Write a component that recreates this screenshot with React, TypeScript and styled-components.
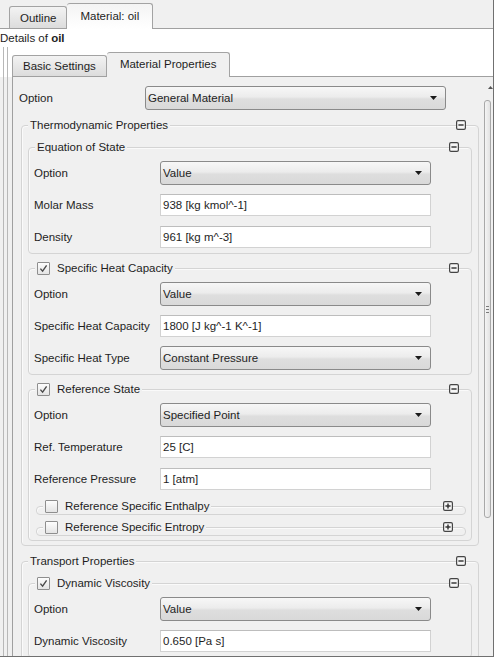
import React from 'react'
import styled, { createGlobalStyle } from 'styled-components'

const GlobalStyle = createGlobalStyle`
  html, body {
    margin: 0;
    padding: 0;
    background: #ffffff;
  }
  body {
    font-family: "Liberation Sans", Arial, sans-serif;
    font-size: 11.5px;
    color: #1e1e1e;
  }
`

const Window = styled.div`
  width: 493px;
  height: 656px;
  border-right: 1px solid #707070;
  border-bottom: 1px solid #707070;
  overflow: hidden;
  display: flex;
  flex-direction: column;
  background: #ffffff;
`

const TabBar = styled.div<{ $height: number; $bg: string }>`
  display: flex;
  align-items: flex-end;
  height: ${p => p.$height}px;
  background: ${p => p.$bg};
  flex-shrink: 0;
`

const TabLine = styled.div<{ $width?: number }>`
  align-self: stretch;
  border-bottom: 1px solid #a0a0a0;
  ${p => (p.$width ? `width: ${p.$width}px;` : 'flex: 1;')}
`

const Tab = styled.div<{ $active?: boolean; $height: number; $pad: number; $activeBg?: string }>`
  box-sizing: border-box;
  height: ${p => p.$height}px;
  padding: 0 ${p => p.$pad}px;
  display: flex;
  align-items: center;
  white-space: nowrap;
  border: 1px solid #a3a3a3;
  border-radius: 3px 3px 0 0;
  ${p =>
    p.$active
      ? `border-bottom: none; background: ${p.$activeBg}; padding-bottom: 2px;`
      : `border-bottom: 1px solid #a0a0a0; background: linear-gradient(#f3f3f3, #dcdcdc);`}
  & + & {
    ${p => (p.$active ? '' : 'border-left: none;')}
  }
`

const DetailsRow = styled.div`
  height: 18px;
  line-height: 18px;
  padding-left: 0;
  background: #ffffff;
  flex-shrink: 0;

  b {
    font-weight: bold;
  }
`

const RailRow = styled.div<{ $bg: string; $grow?: boolean }>`
  display: flex;
  background: ${p => p.$bg};
  ${p => (p.$grow ? 'flex: 1; min-height: 0;' : 'flex-shrink: 0;')}
`

const Rails = styled.div`
  width: 3px;
  margin: 0 4px 0 3px;
  border-left: 1px solid #b8b8b8;
  border-right: 1px solid #b8b8b8;
  flex-shrink: 0;
`

const Panel = styled.div`
  flex: 1;
  display: flex;
  border-left: 1px solid #a0a0a0;
  background: #f0f0f0;
  min-height: 0;
`

const PanelBody = styled.div`
  flex: 1;
  padding-top: 9px;
  overflow: hidden;
`

const Scrollbar = styled.div`
  width: 9px;
  display: flex;
  flex-direction: column;
  flex-shrink: 0;
`

const ScrollArrow = styled.div`
  height: 23px;
  display: flex;
  justify-content: flex-end;
  align-items: center;
  padding-bottom: 2px;
  box-sizing: border-box;
`

const Thumb = styled.div`
  box-sizing: border-box;
  width: 7px;
  height: 418px;
  border: 1px solid #a8a8a8;
  border-radius: 3px;
  background: linear-gradient(to right, #f4f4f4, #e2e2e2);
  display: flex;
  align-items: center;
  justify-content: center;
`

const Grip = styled.div`
  width: 3px;
  height: 7px;
  background: repeating-linear-gradient(#7a7a7a 0 1px, transparent 1px 3px);
`

const Row = styled.div<{ $first?: boolean; $indent: number }>`
  display: flex;
  align-items: center;
  height: 24px;
  margin-top: ${p => (p.$first ? 6 : 8)}px;
  padding-left: ${p => p.$indent}px;
`

const Label = styled.div`
  width: 126px;
  flex-shrink: 0;
  white-space: nowrap;
`

const Select = styled.div<{ $width: number }>`
  box-sizing: border-box;
  width: ${p => p.$width}px;
  height: 24px;
  border: 1px solid #8a8a8a;
  border-radius: 3px;
  background: linear-gradient(#f7f7f7 0%, #ececec 45%, #dedede 55%, #d9d9d9 100%);
  display: flex;
  align-items: center;
  padding: 0 8px 0 2px;
  white-space: nowrap;

  svg {
    margin-left: auto;
  }
`

const Input = styled.div<{ $width: number }>`
  box-sizing: border-box;
  width: ${p => p.$width}px;
  height: 22px;
  border: 1px solid #d2d2d2;
  border-top-color: #bdbdbd;
  background: #ffffff;
  display: flex;
  align-items: center;
  padding-left: 2px;
  white-space: nowrap;
`

const Box = styled.div<{ $top: number; $left: number; $right: number; $bottom: number }>`
  margin: ${p => p.$top}px ${p => p.$right}px 0 ${p => p.$left}px;
  padding-bottom: ${p => p.$bottom}px;
  border: 1px solid #d4d4d4;
  border-radius: 4px;
  box-shadow: inset 1px 1px 0 #fafafa;
`

const Header = styled.div`
  display: flex;
  align-items: center;
  height: 16px;
  margin-top: -9px;
  padding: 0 12px 0 6px;
`

const HeaderLabel = styled.div`
  display: flex;
  align-items: center;
  gap: 7px;
  padding: 0 2px;
  background: #f0f0f0;
  white-space: nowrap;
`

const Check = styled.div`
  box-sizing: border-box;
  width: 13px;
  height: 13px;
  border: 1px solid #8e8e8e;
  border-radius: 1px;
  background: linear-gradient(#fdfdfd, #e4e4e4);
  display: flex;
  align-items: center;
  justify-content: center;
`

const Toggle = styled.svg`
  margin-left: auto;
  flex-shrink: 0;
`

function ArrowDown() {
  return (
    <svg width="7" height="4" viewBox="0 0 7 4">
      <polygon points="0,0 7,0 3.5,4" fill="#1a1a1a" />
    </svg>
  )
}

function ToggleIcon({ open }: { open: boolean }) {
  return (
    <Toggle width="10" height="10" viewBox="0 0 10 10">
      <rect x="0.6" y="0.6" width="8.8" height="8.8" rx="1.4" fill="#f6f6f6" stroke="#454545" strokeWidth="1.2" />
      <line x1="2.4" y1="5" x2="7.6" y2="5" stroke="#2e2e2e" strokeWidth="1.4" />
      {!open && <line x1="5" y1="2.4" x2="5" y2="7.6" stroke="#2e2e2e" strokeWidth="1.4" />}
    </Toggle>
  )
}

function CheckBox({ checked }: { checked: boolean }) {
  return (
    <Check>
      {checked && (
        <svg width="9" height="9" viewBox="0 0 9 9">
          <path d="M1.4 4.6 L3.6 7.2 L7.6 1.4" fill="none" stroke="#4a4a4a" strokeWidth="1.4" />
        </svg>
      )}
    </Check>
  )
}

type Field = { label: string; kind: 'select' | 'input'; value: string }

function Fields({ fields, indent, width }: { fields: Field[]; indent: number; width: number }) {
  return (
    <>
      {fields.map((f, i) => (
        <Row key={f.label} $first={i === 0} $indent={indent}>
          <Label>{f.label}</Label>
          {f.kind === 'select' ? (
            <Select $width={width}>
              {f.value}
              <ArrowDown />
            </Select>
          ) : (
            <Input $width={width}>{f.value}</Input>
          )}
        </Row>
      ))}
    </>
  )
}

type GroupProps = {
  title: string
  check?: boolean
  checked?: boolean
  open?: boolean
  top: number
  left: number
  right: number
  bottom: number
  children?: React.ReactNode
}

function Group({ title, check, checked = false, open = true, top, left, right, bottom, children }: GroupProps) {
  return (
    <Box $top={top} $left={left} $right={right} $bottom={bottom}>
      <Header>
        <HeaderLabel>
          {check && <CheckBox checked={checked} />}
          {title}
        </HeaderLabel>
        <ToggleIcon open={open} />
      </Header>
      {children}
    </Box>
  )
}

const equation: Field[] = [
  { label: 'Option', kind: 'select', value: 'Value' },
  { label: 'Molar Mass', kind: 'input', value: '938 [kg kmol^-1]' },
  { label: 'Density', kind: 'input', value: '961 [kg m^-3]' },
]

const heatCapacity: Field[] = [
  { label: 'Option', kind: 'select', value: 'Value' },
  { label: 'Specific Heat Capacity', kind: 'input', value: '1800 [J kg^-1 K^-1]' },
  { label: 'Specific Heat Type', kind: 'select', value: 'Constant Pressure' },
]

const referenceState: Field[] = [
  { label: 'Option', kind: 'select', value: 'Specified Point' },
  { label: 'Ref. Temperature', kind: 'input', value: '25 [C]' },
  { label: 'Reference Pressure', kind: 'input', value: '1 [atm]' },
]

const viscosity: Field[] = [
  { label: 'Option', kind: 'select', value: 'Value' },
  { label: 'Dynamic Viscosity', kind: 'input', value: '0.650 [Pa s]' },
]

export default function App() {
  return (
    <>
      <GlobalStyle />
      <Window>
        <TabBar $height={29} $bg="#f0f0f0">
          <TabLine $width={9} />
          <Tab $height={23} $pad={10}>Outline</Tab>
          <Tab $active $height={26} $pad={13} $activeBg="linear-gradient(#f4f4f4, #ffffff)">
            Material: oil
          </Tab>
          <TabLine />
        </TabBar>

        <DetailsRow>
          Details of <b>oil</b>
        </DetailsRow>

        <RailRow $bg="#ffffff">
          <Rails />
          <TabBar $height={30} $bg="#ffffff" style={{ flex: 1 }}>
            <Tab $height={22} $pad={10}>Basic Settings</Tab>
            <Tab $active $height={25} $pad={13} $activeBg="#f0f0f0">
              Material Properties
            </Tab>
            <TabLine />
          </TabBar>
        </RailRow>

        <RailRow $bg="#f0f0f0" $grow>
          <Rails />
          <Panel>
            <PanelBody>
              <Row $first $indent={6} style={{ marginTop: 0 }}>
                <Label>Option</Label>
                <Select $width={301}>
                  General Material
                  <ArrowDown />
                </Select>
              </Row>

              <Group title="Thermodynamic Properties" top={15} left={8} right={5} bottom={4}>
                <Group title="Equation of State" top={14} left={6} right={6} bottom={4}>
                  <Fields fields={equation} indent={5} width={271} />
                </Group>
                <Group title="Specific Heat Capacity" check checked top={14} left={6} right={6} bottom={4}>
                  <Fields fields={heatCapacity} indent={5} width={271} />
                </Group>
                <Group title="Reference State" check checked top={14} left={6} right={6} bottom={4}>
                  <Fields fields={referenceState} indent={5} width={271} />
                  <Group title="Reference Specific Enthalpy" check open={false} top={15} left={7} right={5} bottom={0} />
                  <Group title="Reference Specific Entropy" check open={false} top={12} left={7} right={5} bottom={0} />
                </Group>
              </Group>

              <Group title="Transport Properties" top={15} left={8} right={5} bottom={4}>
                <Group title="Dynamic Viscosity" check checked top={14} left={6} right={6} bottom={4}>
                  <Fields fields={viscosity} indent={5} width={271} />
                </Group>
              </Group>
            </PanelBody>
            <Scrollbar>
              <ScrollArrow>
                <svg width="5" height="3" viewBox="0 0 5 3">
                  <polygon points="0,3 5,3 2.5,0" fill="#555" />
                </svg>
              </ScrollArrow>
              <Thumb>
                <Grip />
              </Thumb>
            </Scrollbar>
          </Panel>
        </RailRow>
      </Window>
    </>
  )
}
